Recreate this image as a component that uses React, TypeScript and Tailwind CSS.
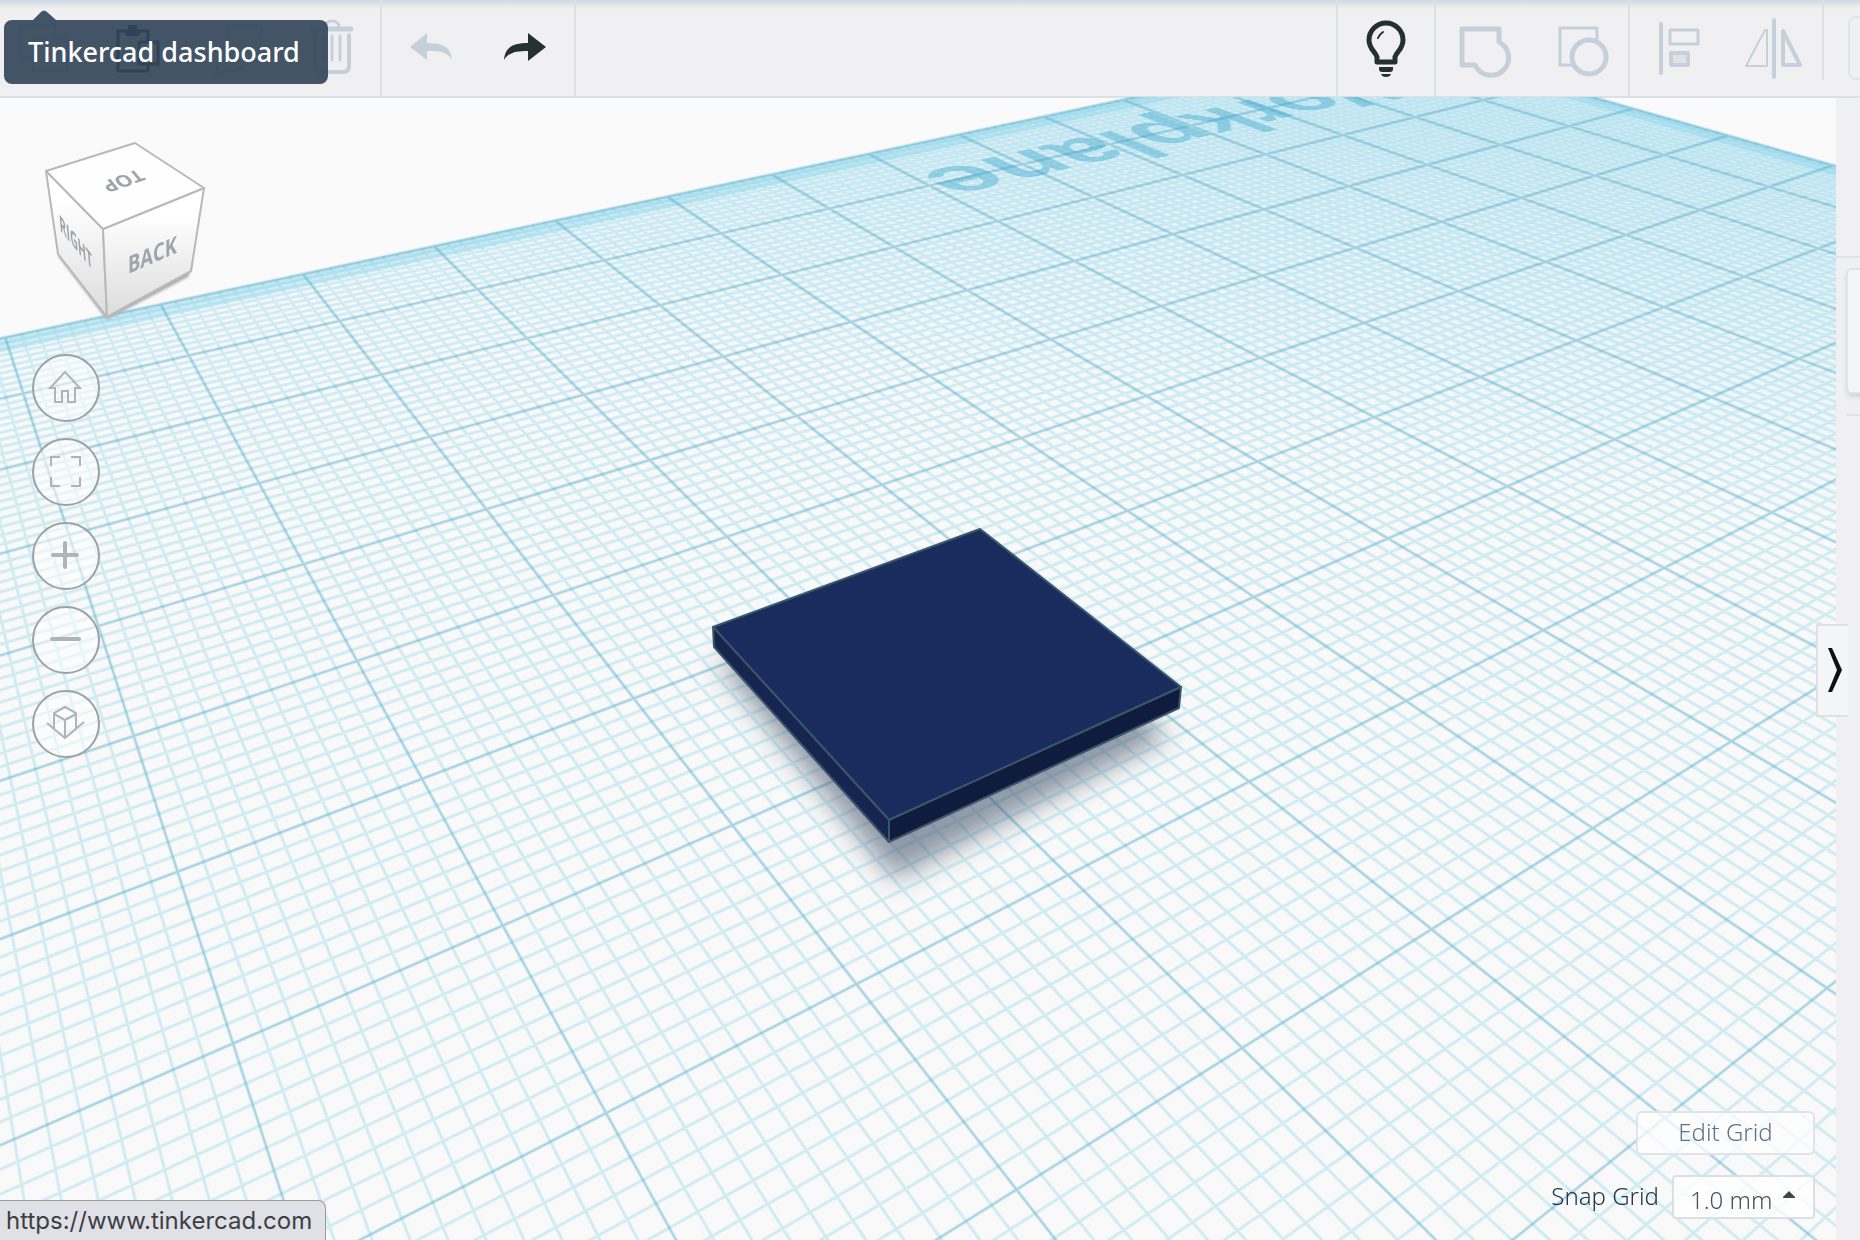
import React, { useState } from 'react';

// Projection from workplane units (1 unit = 10 mm) to viewport pixels
const VIEW = [-99.52574, 10.10006, 1396.567, 14.4678, 21.88026, -55.46023, -0.02771128, -0.04211844];
const NEAR = 0.15;
const SIZE = 20;

const project = (u: number, v: number) => {
  const w = VIEW[6] * u + VIEW[7] * v + 1;
  const x = (VIEW[0] * u + VIEW[1] * v + VIEW[2]) / w;
  const y = (VIEW[3] * u + VIEW[4] * v + VIEW[5]) / w;
  return `${x.toFixed(2)} ${y.toFixed(2)}`;
};

// how far a line may run before it passes behind the camera
const maxV = (u: number) => Math.min(SIZE, (1 + VIEW[6] * u - NEAR) / -VIEW[7]);
const maxU = (v: number) => Math.min(SIZE, (1 + VIEW[7] * v - NEAR) / -VIEW[6]);

const gridPath = (wanted: (i: number) => boolean) => {
  let d = '';
  for (let i = 0; i <= SIZE * 10; i++) {
    if (!wanted(i)) continue;
    const t = i / 10;
    d += `M${project(t, 0)}L${project(t, maxV(t))}M${project(0, t)}L${project(maxU(t), t)}`;
  }
  return d;
};

const minorLines = gridPath((i) => i % 10 !== 0);
const majorLines = gridPath((i) => i % 10 === 0);
const plane = `M${project(0, 0)}L${project(0, maxV(0))}L${project(SIZE, maxV(SIZE))}L${project(SIZE, 0)}Z`;

const rim = (t: number) =>
  `M${project(0, 0)}L${project(0, 14)}L${project(t, 14)}L${project(t, t)}L${project(SIZE, t)}L${project(SIZE, 0)}Z`;

// Puts a label of 100 px per unit flat on the workplane, facing the other way
const labelMatrix = (u0: number, v0: number) => {
  const [a, b, c, d, e, f, g, h] = VIEW;
  const m = [
    a / 100, d / 100, 0, g / 100,
    -b / 100, -e / 100, 0, -h / 100,
    0, 0, 1, 0,
    a * u0 + b * v0 + c, d * u0 + e * v0 + f, 0, g * u0 + h * v0 + 1,
  ];
  return `matrix3d(${m.join(',')})`;
};

interface ToolButtonProps {
  label: string;
  className: string;
  onClick?: () => void;
  children: React.ReactNode;
}

function ToolButton({ label, className, onClick, children }: ToolButtonProps) {
  return (
    <button type="button" aria-label={label} onClick={onClick} className={`h-24 shrink-0 ${className}`}>
      <svg width="96" height="96" viewBox="0 0 96 96" fill="none" stroke="currentColor" strokeLinejoin="round">
        {children}
      </svg>
    </button>
  );
}

function Toolbar() {
  return (
    <header className="flex h-[98px] shrink-0 items-start overflow-hidden border-b-2 border-[#dce1e6] bg-[#f0f0f2] bg-linear-to-b from-[#cfd8e1] to-[#f0f0f2] to-[9px] text-[#c5d0da]">
      <div className="flex h-full border-r-2 border-[#dce1e6]">
        <ToolButton label="Copy" className="w-[95px]">
          <path d="M32 58H21V25h34v12" strokeWidth="3" />
          <path d="M33 38h34v33H33z" strokeWidth="3" />
        </ToolButton>
        <ToolButton label="Paste" className="w-[95px] text-[#24312f]">
          <path d="M46 71H23V31h30v10" strokeWidth="3" />
          <path d="M53 65V71H46" strokeWidth="3" />
          <path d="M44 42h19v22H44z" strokeWidth="3" />
          <path d="M28 31h5v-6h9v6h5l-4 5H32z" fill="currentColor" stroke="none" />
        </ToolButton>
        <ToolButton label="Duplicate and repeat" className="w-[95px]">
          <path d="M38 26h33v34H38z" strokeWidth="3" />
          <path d="M33 46l-7 28 26-6" strokeWidth="3" />
        </ToolButton>
        <ToolButton label="Delete" className="w-[95px]">
          <path d="M28 29h38" strokeWidth="5" strokeLinecap="round" />
          <path d="M40 27c0-8 14-8 14 0" strokeWidth="3" />
          <path d="M30 35v31q0 6 6 6h22q6 0 6-6V35" strokeWidth="4" strokeLinecap="round" />
          <path d="M39 36v24M47 36v24M55 36v24" strokeWidth="3" strokeLinecap="round" />
        </ToolButton>
      </div>
      <div className="flex h-full border-r-2 border-[#dce1e6]">
        <ToolButton label="Undo" className="w-24">
          <path d="M28 47 45 33V43C59 43 69 46 70 60 65 51 57 51 45 51V60Z" fill="currentColor" stroke="none" />
        </ToolButton>
        <ToolButton label="Redo" className="w-24 text-[#24312f]">
          <path d="M68 47 50 33V43C37 43 27 46 26 60 31 52 39 51 50 51V61Z" fill="currentColor" stroke="none" />
        </ToolButton>
      </div>
      <div className="flex-1" />
      <div className="flex h-full border-l-2 border-[#dce1e6]">
        <ToolButton label="Show all" className="w-24 text-[#24312f]">
          <path d="M39 62V57C37 51 31 49 31 40A17 17 0 0 1 65 40C65 49 59 51 57 57V62Z" strokeWidth="5" />
          <path d="M40 38c1-3 2-4 5-6" strokeWidth="2" strokeLinecap="round" />
          <path d="M41 67h14v2q0 3-3 3h-8q-3 0-3-3zM43 74h10q-1 3-5 3t-5-3z" fill="currentColor" stroke="none" />
        </ToolButton>
      </div>
      <div className="flex h-full border-l-2 border-[#dce1e6]">
        <ToolButton label="Group" className="w-24">
          <path d="M26 29H63V42A17.6 17.6 0 1 1 39 65H26Z" strokeWidth="5" />
        </ToolButton>
        <ToolButton label="Ungroup" className="w-24">
          <path d="M65 40V28H28V65H40" strokeWidth="3" />
          <circle cx="57" cy="57" r="17" strokeWidth="5" />
        </ToolButton>
      </div>
      <div className="flex h-full border-l-2 border-[#dce1e6]">
        <ToolButton label="Align" className="w-24">
          <path d="M31 24v49" strokeWidth="4" strokeLinecap="round" />
          <path d="M40 30h28v14H40z" strokeWidth="3" />
          <path d="M41 53h17v12H41z" fill="#dfe3e8" strokeWidth="4" />
        </ToolButton>
        <ToolButton label="Mirror" className="w-24">
          <path d="M48 20v57" strokeWidth="4" strokeLinecap="round" />
          <path d="M20 66 39 30h2v36z" strokeWidth="2" />
          <path d="M57 31v34h17z" strokeWidth="4" />
        </ToolButton>
      </div>
      <div className="h-20 w-[2px] bg-[#dce1e6]" />
      <div className="ml-6 w-3 shrink-0">
        <button type="button" aria-label="Import" className="mt-4 h-16 w-24 rounded-lg border-2 border-[#e0e5ea]" />
      </div>
    </header>
  );
}

function Workplane() {
  return (
    <div className="absolute inset-0 overflow-hidden">
      <svg className="absolute inset-0 h-full w-full" aria-hidden="true">
        <defs>
          <linearGradient id="haze" gradientUnits="userSpaceOnUse" x1="1250" y1="-40" x2="1190" y2="330">
            <stop offset="0" stopColor="#8fd6ec" stopOpacity="0.26" />
            <stop offset="1" stopColor="#8fd6ec" stopOpacity="0" />
          </linearGradient>
        </defs>
        <path d={plane} fill="#f9f9f9" />
        <path d={plane} fill="url(#haze)" />
        <path d={rim(0.12)} fill="#7fd0ea" fillOpacity="0.15" />
        <path d={rim(0.25)} fill="#7fd0ea" fillOpacity="0.32" />
        <path d={minorLines} stroke="#7fd2ea" strokeOpacity="0.13" strokeWidth="4" />
        <path d={minorLines} stroke="#7fd2ea" strokeOpacity="0.24" strokeWidth="2" />
        <path d={majorLines} stroke="#5fb4d2" strokeOpacity="0.16" strokeWidth="4" />
        <path d={majorLines} stroke="#5aaecb" strokeOpacity="0.42" strokeWidth="2" />
      </svg>
      <div
        className="absolute top-0 left-0 origin-top-left font-['Liberation_Sans',sans-serif] text-[115px] leading-none font-bold whitespace-nowrap text-[#3aa5cb]/42"
        style={{ transform: labelMatrix(1.1, 1.67) }}
      >
        Workplane
      </div>
      <svg className="absolute inset-0 h-full w-full" role="img" aria-label="Box">
        <defs>
          <filter id="shadow" x="-20%" y="-20%" width="140%" height="140%">
            <feGaussianBlur stdDeviation="13" />
          </filter>
        </defs>
        <path d="M718 566 894 782 1168 640 1010 500Z" fill="#3c4c64" fillOpacity="0.55" filter="url(#shadow)" />
        <g stroke="#3b5569" strokeWidth="2" strokeLinejoin="round">
          <path d="M713 530 980 432 1181 590 889 723Z" fill="#1a2c5e" />
          <path d="M713 530 889 723V745L714 550Z" fill="#152550" />
          <path d="M889 723 1181 590 1179 611 889 745Z" fill="#101c3d" />
        </g>
      </svg>
    </div>
  );
}

function ViewCube() {
  return (
    <svg
      className="absolute top-10 left-9 font-['Open_Sans',sans-serif] text-xl font-bold"
      width="180"
      height="190"
      viewBox="36 137 180 190"
      role="img"
      aria-label="View cube"
    >
      <defs>
        <linearGradient id="face" x1="0" y1="0" x2="0" y2="1">
          <stop offset="0.2" stopColor="#ffffff" />
          <stop offset="1" stopColor="#dcdcdc" />
        </linearGradient>
        <filter id="soft">
          <feGaussianBlur stdDeviation="1" />
        </filter>
      </defs>
      <path d="M59 255 107 318 187 276 190 268 107 310Z" fill="#a9a9a9" stroke="#b0b0b0" strokeWidth="3" filter="url(#soft)" />
      <g stroke="#b9b9b9" strokeWidth="2" strokeLinejoin="round">
        <path d="M46 171 103 229 107 317 58 254Z" fill="url(#face)" />
        <path d="M103 229 204 188 191 271 107 317Z" fill="url(#face)" />
        <path d="M46 171 135 143 204 188 103 229Z" fill="#fefefe" />
      </g>
      <g fill="#a0a5ad">
        <text transform="matrix(-0.95 0.34 -0.6 -0.72 138 169)">TOP</text>
        <text transform="matrix(0.92 -0.4 0 1.2 128 274)">BACK</text>
        <text transform="matrix(0.54 0.66 0.1 1.15 60 230)">RIGHT</text>
      </g>
    </svg>
  );
}

const viewControls = [
  { label: 'Home view', icon: <path d="M33 18 18 34h5v14h7V37h6v11h7V34h5z" /> },
  { label: 'Fit view to selection', icon: <path d="M19 28v-9h9M39 19h9v9M48 39v9h-9M28 48h-9v-9" /> },
  { label: 'Zoom in', icon: <path d="M33 21v24M21 33h24" strokeWidth="4" strokeLinecap="round" /> },
  { label: 'Zoom out', icon: <path d="M20 33h27" strokeWidth="4" strokeLinecap="round" /> },
  {
    label: 'Switch to orthographic view',
    icon: <path d="M33 17 22 23v16l11 9 11-9V23zM22 24l11 6 11-6M33 30v18M15 33l18 15 19-16" />,
  },
];

export default function App() {
  const [panelOpen, setPanelOpen] = useState(true);
  const [snap, setSnap] = useState('1.0');

  return (
    <div className="relative flex h-screen flex-col overflow-hidden bg-[#fafafa] font-['Noto_Sans',sans-serif]">
      <Toolbar />

      <div className="flex min-h-0 flex-1">
        <main className="relative -mt-px min-w-0 flex-1">
          <Workplane />
          <ViewCube />

          {/* View controls */}
          <nav className="absolute top-[257px] left-8 flex flex-col gap-4">
            {viewControls.map((control) => (
              <button
                key={control.label}
                type="button"
                aria-label={control.label}
                className="size-17 rounded-full border-2 border-[#9ca1a5] bg-white/50 text-[#b0b4b7]"
              >
                <svg width="68" height="68" viewBox="0 0 68 68" className="-m-[2px]" fill="none" stroke="currentColor" strokeWidth="2">
                  {control.icon}
                </svg>
              </button>
            ))}
          </nav>

          {/* Grid settings */}
          <div className="absolute right-[21px] bottom-[21px] flex flex-col items-end gap-5 text-2xl font-light">
            <button type="button" className="h-11 w-[179px] rounded-md border-2 border-[#e0e3ea] bg-white/70 pb-[2px] leading-8 text-[#607387]">
              Edit Grid
            </button>
            <div className="flex items-center gap-[13px]">
              <label htmlFor="snap" className="pb-[2px] text-[#20374e]">
                Snap Grid
              </label>
              <div className="relative">
                <select
                  id="snap"
                  value={snap}
                  onChange={(e) => setSnap(e.target.value)}
                  className="block h-11 w-[143px] appearance-none rounded-sm border-2 border-[#dbdfe5] bg-white/80 pt-[6px] pl-4 text-[#4b5250]"
                >
                  <option value="1.0">1.0 mm</option>
                  <option value="0.5">0.5 mm</option>
                  <option value="0.1">0.1 mm</option>
                </select>
                <svg className="pointer-events-none absolute top-4 right-5" width="12" height="8" viewBox="0 0 12 8" fill="#3f4644">
                  <path d="M6 0 12 6v1H0V6z" />
                </svg>
              </div>
            </div>
          </div>

          {/* Panel handle */}
          <button
            type="button"
            aria-label="Toggle shapes panel"
            aria-expanded={panelOpen}
            onClick={() => setPanelOpen(!panelOpen)}
            className="absolute top-[527px] -right-3 z-10 h-[93px] w-8 border-2 border-r-0 border-[#dde1e6] bg-[#f3f5f7]"
          >
            <svg width="28" height="89" viewBox="0 0 28 89" fill="#111">
              <path d="M10 22h4l10 22-10 22h-4l9-22z" />
            </svg>
          </button>
        </main>

        {/* Shapes panel */}
        <aside className="w-6 shrink-0 overflow-hidden bg-[#f0f0f2]">
          <div className="mt-[158px] h-[2px] bg-[#dfe2e7]" />
          <div className="mt-[10px] ml-[10px] h-[126px] w-40 rounded-md border-2 border-[#dfe3e8] bg-[#f3f5f8] shadow-md" />
          <div className="mt-[20px] ml-[10px] h-[2px] bg-[#dfe2e7]" />
        </aside>
      </div>

      {/* Tooltip */}
      <div role="tooltip" className="absolute top-5 left-1 flex h-16 w-[324px] items-center rounded-lg bg-[#314459]/91 pl-6 text-[27px] font-medium text-white">
        <svg className="absolute -top-[10px] left-[29px]" width="23" height="10" viewBox="0 0 23 10" fill="#314459" fillOpacity="0.91">
          <path d="M0 10 8 2q3-3 6 0l9 8z" />
        </svg>
        Tinkercad dashboard
      </div>

      {/* Link status */}
      <a
        href="https://www.tinkercad.com"
        className="absolute bottom-0 left-0 flex h-10 w-[326px] items-center rounded-tr-lg border-t border-r border-[#9b9b98] bg-[#dfe1e6] pl-[6px] font-['Inter',sans-serif] text-2xl text-[#3d3f44]"
      >
        https://www.tinkercad.com
      </a>
    </div>
  );
}
